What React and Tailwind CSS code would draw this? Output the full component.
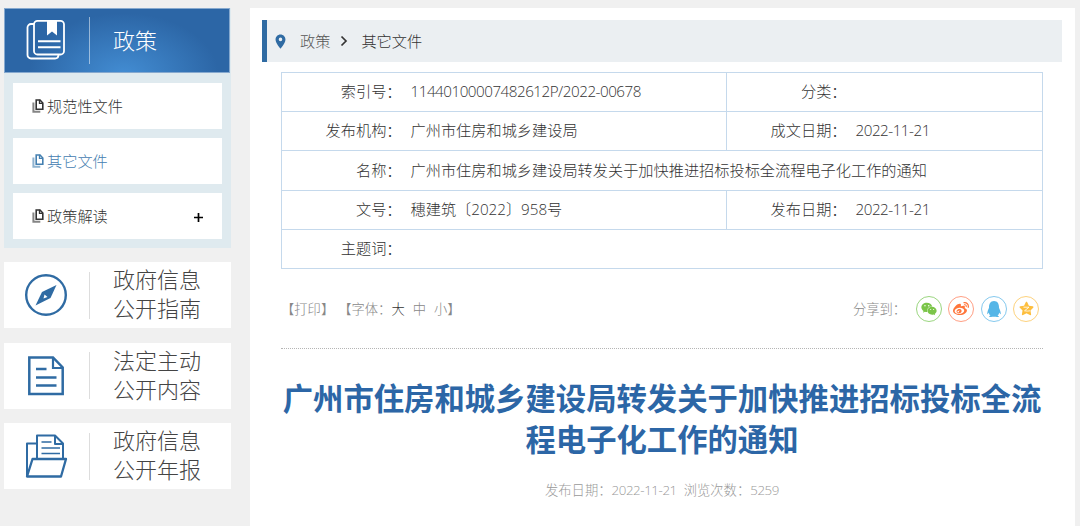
import { FaWeixin, FaWeibo, FaQq, FaStar } from 'react-icons/fa';
import { MdLocationOn } from 'react-icons/md';

const menuItems = [
  { label: '规范性文件' },
  { label: '其它文件', active: true },
  { label: '政策解读', expandable: true },
];

const cards = [
  { icon: CompassIcon, lines: ['政府信息', '公开指南'] },
  { icon: DocumentIcon, lines: ['法定主动', '公开内容'] },
  { icon: FolderIcon, lines: ['政府信息', '公开年报'] },
];

const rows = [
  [['索引号：', '11440100007482612P/2022-00678'], ['分类：', '']],
  [['发布机构：', '广州市住房和城乡建设局'], ['成文日期：', '2022-11-21']],
  [['名称：', '广州市住房和城乡建设局转发关于加快推进招标投标全流程电子化工作的通知']],
  [['文号：', '穗建筑〔2022〕958号'], ['发布日期：', '2022-11-21']],
  [['主题词：', '']],
];

const shares = [
  { name: '微信', icon: FaWeixin, color: 'border-[#9bd680] text-[#7bc549]' },
  { name: '微博', icon: FaWeibo, color: 'border-[#ff9f84] text-[#ff763b]' },
  { name: 'QQ', icon: FaQq, color: 'border-[#85c9ee] text-[#56b6e7]' },
  { name: 'QQ空间', icon: QzoneIcon, color: 'border-[#fdd27d] text-[#fdbe3d]' },
];

function BookIcon() {
  return (
    <svg width="40" height="42" viewBox="0 0 40 42" fill="none" stroke="#fff" strokeWidth="1.8">
      <path d="M8 5H5a3.500 3.500 0 0 0-3.500 3.500V36A3.500 3.500 0 0 0 5 39.500h24q3.500 0 3.500-4" />
      <rect x="8" y="1.800" width="30" height="33.700" rx="3.500" />
      <path d="M21 1.500h10V16.500l-5-4-5 4z" fill="#fff" stroke="none" />
      <path d="M12 22.200h22.500M12 28.200h22.500" strokeWidth="2" />
    </svg>
  );
}

function CompassIcon() {
  return (
    <svg width="44" height="44" viewBox="0 0 44 44" fill="none">
      <circle cx="22" cy="22" r="19.800" stroke="#2f6ba3" strokeWidth="2.400" />
      <path d="M32.500 12 26.500 25 11.500 32.500 18 19z" fill="#2f6ba3" />
      <path d="M20.500 21.500l3 2.500-4 1.500z" fill="#fff" />
    </svg>
  );
}

function DocumentIcon() {
  return (
    <svg width="44" height="44" viewBox="0 0 44 44" fill="none" stroke="#2f6ba3" strokeWidth="2.500">
      <path d="M5.300 3.500H29L38.700 13.500v26.500H5.300z" />
      <path d="M29 4v10h9.500" strokeWidth="2.200" />
      <path d="M12 15h10.500M12 23.500h20.500M12 31.500h20.500" />
    </svg>
  );
}

function FolderIcon() {
  return (
    <svg width="44" height="46" viewBox="0 0 44 46" fill="none" stroke="#2f6ba3" strokeWidth="2" strokeLinejoin="round">
      <path d="M13 10.500H3v33" />
      <path d="M13 25V2.500h18l8 8v15" />
      <path d="M31 2.500v8.500h8" />
      <path d="M17.500 9h10M17.500 15h18.500M17.500 20.500h18.500" strokeWidth="1.700" />
      <path d="M8.500 26h33.500L37 43.500H3z" strokeWidth="2.300" />
    </svg>
  );
}

function CopyIcon() {
  return (
    <svg width="12" height="14" viewBox="0 0 12 14" fill="none" stroke="currentColor">
      <path d="M4.200 1h3.800l2.800 3v6.300H4.200z" strokeWidth="1.600" />
      <path d="M7.500.8v3.500H11" strokeWidth="1.300" />
      <path d="M1.400 3.500v9.200h6.900" strokeWidth="2" opacity=".6" />
    </svg>
  );
}

function QzoneIcon() {
  return (
    <span className="relative flex">
      <FaStar size={15} />
      <svg className="absolute inset-0" width="15" height="15" viewBox="0 0 15 15" fill="none" stroke="#fff" strokeWidth=".8">
        <path d="M4.500 6.200h5.500L5.500 9.800q3 .6 5.500 0" />
      </svg>
    </span>
  );
}

function Sidebar() {
  return (
    <aside className="w-[227px] shrink-0">
      <div className="bg-[#dfeaef] pb-[9px]">
        <div className="flex h-[65px] w-[226px] items-center border border-[#86a9cf] bg-[radial-gradient(ellipse_95px_62px_at_53%_105%,#438dd3_0%,#2c66a6_100%)]">
          <div className="flex w-[84px] pb-px pl-[21px]"><BookIcon /></div>
          <div className="h-[47px] w-px bg-white/50" />
          <h2 className="ml-[23px] text-[22px] text-white">政策</h2>
        </div>
        <ul className="mx-[9px] mt-[10px] flex flex-col gap-[9px]">
          {menuItems.map((item) => (
            <li
              key={item.label}
              className={`flex h-[46px] items-center bg-white px-[19px] text-[15.2px] ${item.active ? 'text-[#4580b1]' : 'text-[#333]'}`}
            >
              <CopyIcon />
              <span className="ml-[3px]">{item.label}</span>
              {item.expandable && (
                <svg className="mt-[3px] ml-auto" width="9" height="9" viewBox="0 0 9 9" stroke="#000" strokeWidth="1.700">
                  <path d="M4.500 0v9M0 4.500h9" />
                </svg>
              )}
            </li>
          ))}
        </ul>
      </div>

      <div className="mt-[14px] flex flex-col gap-[14.500px]">
        {cards.map(({ icon: Icon, lines }) => (
          <div key={lines[1]} className="flex h-[66px] items-center bg-white">
            <div className="flex w-[85px] pl-5">
              <Icon />
            </div>
            <div className="h-[47px] w-px bg-[#ddd]" />
            <div className="ml-[23px] pb-[2px] text-[22px] leading-[29px] text-[#444]">
              <p>{lines[0]}</p>
              <p>{lines[1]}</p>
            </div>
          </div>
        ))}
      </div>
    </aside>
  );
}

function InfoTable() {
  return (
    <table className="ml-[19px] w-[762px] table-fixed border-collapse text-[15.2px] text-[#333]">
      <colgroup>
        <col className="w-[120px]" />
        <col className="w-[325px]" />
        <col className="w-[120px]" />
        <col />
      </colgroup>
      <tbody>
        {rows.map((cells) => (
          <tr key={cells[0][0]} className="h-[39.200px] border border-[#c5d9ec]">
            {cells.map(([label, value], i) => [
              <th key={label} className={`p-0 pb-px text-right font-light ${i > 0 ? 'border-l border-[#c5d9ec]' : ''}`}>
                {label}
              </th>,
              <td
                key={`${label}-value`}
                colSpan={cells.length === 1 ? 3 : 1}
                className={`p-0 pb-px pl-[9px] whitespace-nowrap ${/^[\w/-]+$/.test(value) ? 'tracking-[-0.48px]' : ''}`}
              >
                {value}
              </td>,
            ])}
          </tr>
        ))}
      </tbody>
    </table>
  );
}

export default function App() {
  return (
    <div
      lang="zh-CN"
      className="flex h-[526px] w-[1080px] gap-[19px] overflow-hidden bg-[#f0f0f0] pt-2 pl-1 font-['Open_Sans','Noto_Sans_CJK_SC',sans-serif] font-light"
    >
      <Sidebar />
      <main className="w-[825px] shrink-0 bg-white px-3 pt-3">
        <nav className="flex h-[42px] w-[800px] items-center border-l-[5px] border-[#2f6ba3] bg-[#ebeff2] text-[15.2px] text-[#333]">
          <MdLocationOn size={17} className="ml-[5px] text-[#2f6ba3]" />
          <span className="ml-[11px] text-[#555]">政策</span>
          <svg className="mx-[10px]" width="8" height="12" viewBox="0 0 8 12" fill="none" stroke="#333" strokeWidth="1.700">
            <path d="M1.500 1.500 6 6l-4.500 4.500" />
          </svg>
          <span className="ml-[3px]">其它文件</span>
        </nav>
        <div className="h-[10px]" />
        <InfoTable />

        <div className="ml-[19px] flex h-20 w-[762px] items-center border-b border-dotted border-[#b5b5b5] pt-px text-[13.300px] text-[#888]">
          <span className="pt-[2px]">【打印】</span>
          <span className="ml-1 pt-[2px]">【字体：</span>
          <span className="pt-[2px] text-[#333]">大</span>
          <span className="ml-2 pt-[2px]">中</span>
          <span className="ml-2 pt-[2px]">小】</span>
          <span className="ml-auto pt-[2px]">分享到：</span>
          <div className="mr-1 ml-[10px] flex gap-[6.300px]">
            {shares.map(({ name, icon: Icon, color }) => (
              <a key={name} title={name} className={`flex size-[26px] items-center justify-center rounded-full border ${color}`}>
                <Icon size={16} />
              </a>
            ))}
          </div>
        </div>

        <h1 className="mt-[29px] ml-[19px] w-[762px] text-center text-[30.350px] leading-[41px] font-bold text-[#2c66a6]">
          广州市住房和城乡建设局转发关于加快推进招标投标全流程电子化工作的通知
        </h1>
        <p className="mt-[21px] ml-[19px] w-[762px] text-center text-[13.300px] text-[#999]">
          发布日期：<span className="tracking-[-0.400px]">2022-11-21</span>&nbsp; 浏览次数：<span className="tracking-[-0.400px]">5259</span>
        </p>
      </main>
    </div>
  );
}
